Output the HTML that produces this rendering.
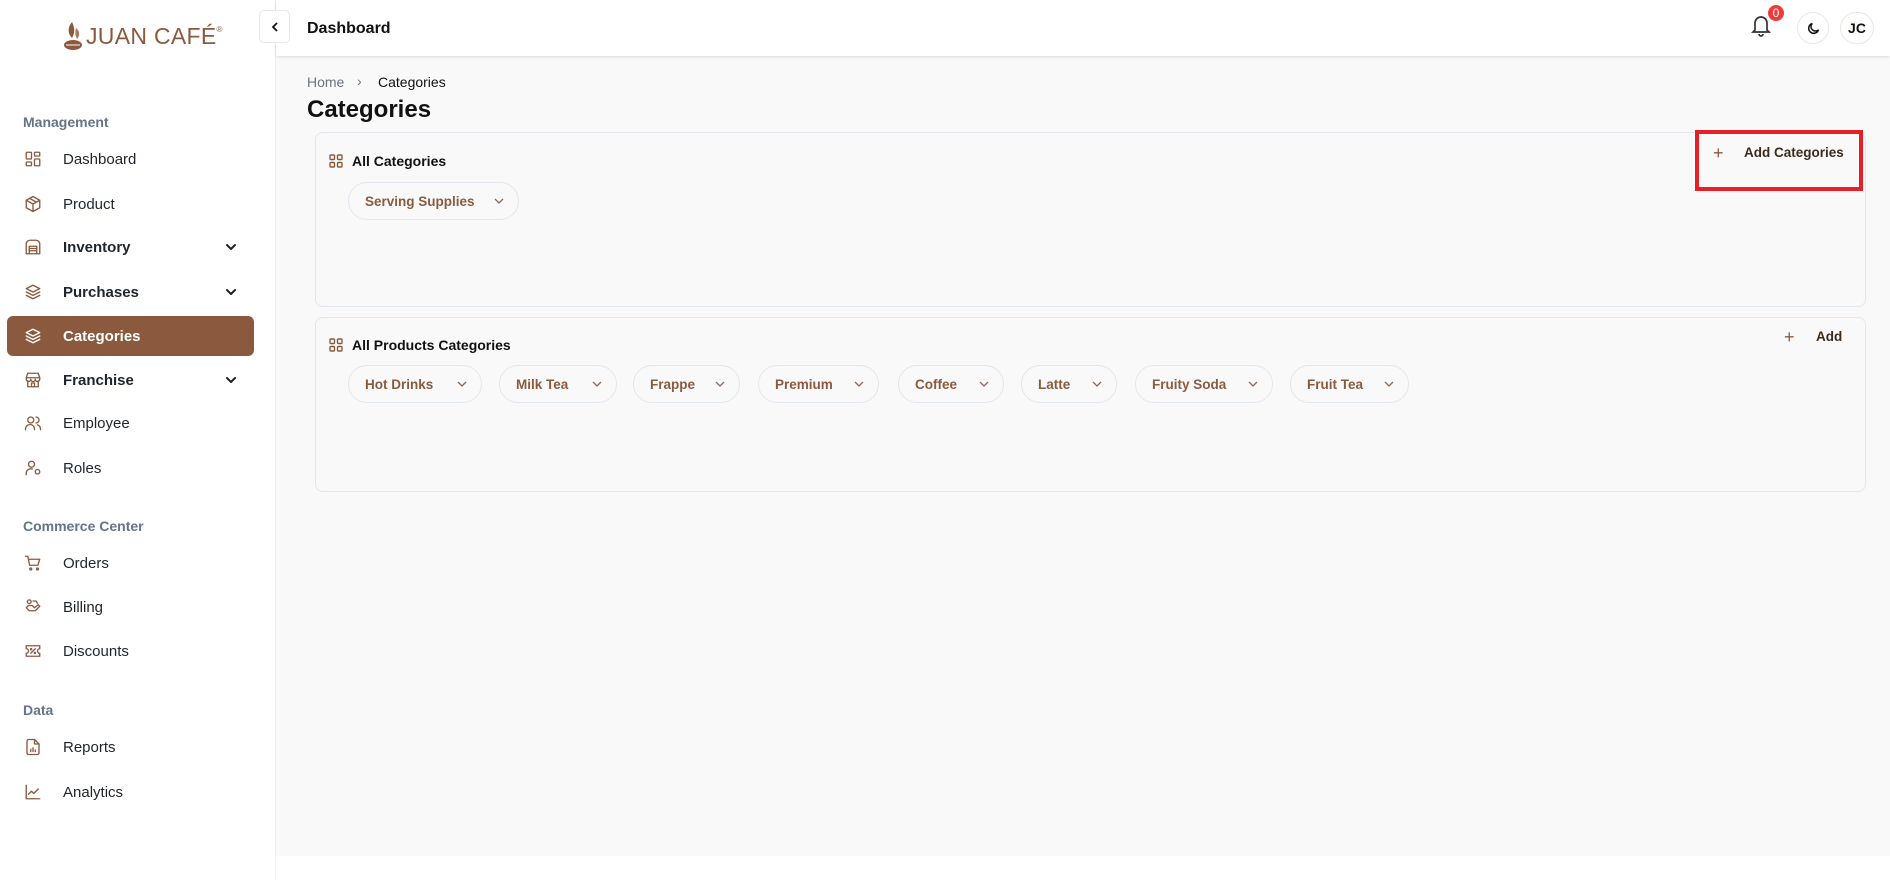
<!DOCTYPE html>
<html><head><meta charset="utf-8"><style>
*{box-sizing:border-box;margin:0;padding:0}
body{width:1890px;height:880px;position:relative;background:#fff;font-family:"Liberation Sans",sans-serif;overflow:hidden;color:#111}
.abs{position:absolute}
#side{left:0;top:0;width:276px;height:880px;background:#fff;border-right:1px solid #eceef1}
.sec{position:absolute;left:23px;font-size:14px;color:#64748b;font-weight:bold}
.it{position:absolute;left:7px;width:247px;height:40px;display:flex;align-items:center;font-size:15px;color:#1f2430}
.it svg{position:absolute;left:17px;width:18px;height:18px;fill:none;stroke:#8b5a3e;stroke-width:1.8;stroke-linecap:round;stroke-linejoin:round}
.it span{position:absolute;left:56px}
.it.b span{font-weight:bold}
.it .ch{position:absolute;left:218px;width:12px;height:12px;stroke:#222;stroke-width:2}
.it.act{background:#8b5a3e;border-radius:6px;color:#fff}
.it.act svg{stroke:#fff}
#main{left:276px;top:56px;width:1614px;height:800px;background:#f9f9fa}
#hdr{left:276px;top:0;width:1614px;height:56px;background:#fff;box-shadow:0 1px 3px rgba(0,0,0,.12)}
.card{position:absolute;left:315px;width:1551px;border:1px solid #e3e7ee;border-radius:8px;background:#f9f9fa}
.ct{position:absolute;left:13px;display:flex;align-items:center;font-size:14px;font-weight:bold;color:#111}
.chip{position:absolute;height:38px;border:1px solid #e3e7ee;border-radius:19px;font-size:13.5px;font-weight:bold;color:#8b5a3e;display:flex;align-items:center;padding-left:16px}
.chip svg{position:absolute;right:14px;top:14px;width:10px;height:8px;fill:none;stroke:#8b6a5a;stroke-width:1.3}
.gi{width:14px;height:14px;margin-right:9px}
</style></head><body>
<div id="side" class="abs">
  <div class="abs" style="left:62px;top:20px;display:flex;align-items:center">
    <svg width="22" height="32" viewBox="0 0 22 32"><path d="M10 2c-5 6-4 12 0 16 3-5 3-10 0-16z" fill="#8b5a3e"/><path d="M14 8c4 3 4 8 1 11-2-4-2-7-1-11z" fill="#a97a5e"/><ellipse cx="11" cy="25" rx="9" ry="5" fill="#8b5a3e"/><path d="M4 25h14" stroke="#fff" stroke-width="1"/></svg>
    <span style="font-size:23px;color:#8b5a3e;letter-spacing:0.3px;margin-left:2px">JUAN CAFÉ</span><sup style="font-size:8px;color:#8b5a3e;margin-top:-14px">®</sup>
  </div>
  <div class="sec" style="top:114px">Management</div>
  <div class="it" style="top:139px"><svg viewBox="0 0 24 24"><rect x="3" y="3" width="7" height="9" rx="1"/><rect x="14" y="3" width="7" height="5" rx="1"/><rect x="14" y="12" width="7" height="9" rx="1"/><rect x="3" y="16" width="7" height="5" rx="1"/></svg><span>Dashboard</span></div>
  <div class="it" style="top:184px"><svg viewBox="0 0 24 24"><path d="M12 2l9 5v10l-9 5-9-5V7z"/><path d="M3 7l9 5 9-5M12 12v10M7.5 4.5l9 5"/></svg><span>Product</span></div>
  <div class="it b" style="top:227px"><svg viewBox="0 0 24 24"><path d="M3 21V8a5 5 0 0 1 5-5h8a5 5 0 0 1 5 5v13z"/><path d="M7 21v-10h10v10M7 14h10M7 17h10"/></svg><span>Inventory</span><svg class="ch" viewBox="0 0 12 12"><path d="M2 4l4 4 4-4"/></svg></div>
  <div class="it b" style="top:272px"><svg viewBox="0 0 24 24"><path d="M12 3l9 4.5-9 4.5-9-4.5z"/><path d="M3 12l9 4.5 9-4.5M3 16.5l9 4.5 9-4.5"/></svg><span>Purchases</span><svg class="ch" viewBox="0 0 12 12"><path d="M2 4l4 4 4-4"/></svg></div>
  <div class="it act b" style="top:316px"><svg viewBox="0 0 24 24"><path d="M12 3l9 4.5-9 4.5-9-4.5z"/><path d="M3 12l9 4.5 9-4.5M3 16.5l9 4.5 9-4.5"/></svg><span>Categories</span></div>
  <div class="it b" style="top:360px"><svg viewBox="0 0 24 24"><path d="M3 9l2-6h14l2 6z"/><path d="M3 9v2a3 3 0 0 0 6 0 3 3 0 0 0 6 0 3 3 0 0 0 6 0V9M5 13v8h14v-8M10 21v-5h4v5"/></svg><span>Franchise</span><svg class="ch" viewBox="0 0 12 12"><path d="M2 4l4 4 4-4"/></svg></div>
  <div class="it" style="top:403px"><svg viewBox="0 0 24 24"><circle cx="9" cy="8" r="4"/><path d="M2 21v-1a6 6 0 0 1 12 0v1M16 4a4 4 0 0 1 0 8M22 21v-1a6 6 0 0 0-4-5.5"/></svg><span>Employee</span></div>
  <div class="it" style="top:448px"><svg viewBox="0 0 24 24"><circle cx="10" cy="7" r="4"/><path d="M3 21v-2a6 6 0 0 1 8-5.6"/><circle cx="18" cy="17" r="3"/></svg><span>Roles</span></div>
  <div class="sec" style="top:518px">Commerce Center</div>
  <div class="it" style="top:543px"><svg viewBox="0 0 24 24"><path d="M2 3h3l2.5 12h11L21 7H6"/><circle cx="9" cy="20" r="1.3"/><circle cx="18" cy="20" r="1.3"/></svg><span>Orders</span></div>
  <div class="it" style="top:587px"><svg viewBox="0 0 24 24"><circle cx="7" cy="5" r="2.5"/><path d="M3 13l4 4h8l6-6-2-2-5 4M3 13l3-3h5l2 2"/><path d="M12 4h4l2 3"/></svg><span>Billing</span></div>
  <div class="it" style="top:631px"><svg viewBox="0 0 24 24"><path d="M3 5h18v4a3 3 0 0 0 0 6v4H3v-4a3 3 0 0 0 0-6z"/><path d="M9 15l6-6"/><circle cx="9.5" cy="9.5" r=".8"/><circle cx="14.5" cy="14.5" r=".8"/></svg><span>Discounts</span></div>
  <div class="sec" style="top:702px">Data</div>
  <div class="it" style="top:727px"><svg viewBox="0 0 24 24"><path d="M14 2H6a2 2 0 0 0-2 2v16a2 2 0 0 0 2 2h12a2 2 0 0 0 2-2V8z"/><path d="M14 2v6h6M9 18v-3M12 18v-5M15 18v-2"/></svg><span>Reports</span></div>
  <div class="it" style="top:772px"><svg viewBox="0 0 24 24"><path d="M3 3v18h18"/><path d="M6 15l4-4 3 3 6-6"/></svg><span>Analytics</span></div>
</div>
<div id="main" class="abs"></div>
<div id="hdr" class="abs">
  <div class="abs" style="left:-17px;top:10px;width:31px;height:33px;border:1px solid #e3e7ee;border-radius:5px;background:#fff"><svg style="position:absolute;left:9px;top:10px" width="12" height="12" viewBox="0 0 12 12"><path d="M8 2L4 6l4 4" fill="none" stroke="#111" stroke-width="1.8"/></svg></div>
  <div class="abs" style="left:31px;top:20px;font-size:16px;font-weight:bold">Dashboard</div>
  <svg class="abs" style="left:1473px;top:13px" width="24" height="24" viewBox="0 0 24 24" fill="none" stroke="#333" stroke-width="1.7"><path d="M6 17V10a6 6 0 0 1 12 0v7l2 2H4z"/><path d="M10 21a2 2 0 0 0 4 0"/></svg>
  <div class="abs" style="left:1492px;top:5px;width:16px;height:16px;border-radius:8px;background:#ef3b3b;color:#fff;font-size:12px;text-align:center;line-height:16px">0</div>
  <div class="abs" style="left:1521px;top:12px;width:32px;height:32px;border:1px solid #e3e7ee;border-radius:16px"><svg style="position:absolute;left:8px;top:8px" width="15" height="15" viewBox="0 0 24 24" fill="none" stroke="#111" stroke-width="2.4"><path d="M20 14A8 8 0 1 1 10 4a6 6 0 0 0 10 10z"/></svg></div>
  <div class="abs" style="left:1564px;top:12px;width:34px;height:32px;border:1px solid #e3e7ee;border-radius:16px;font-size:14px;font-weight:bold;text-align:center;line-height:30px">JC</div>
</div>
<div class="abs" style="left:307px;top:74px;font-size:14px;color:#6b7280">Home</div>
<div class="abs" style="left:357px;top:73px;font-size:14px;color:#6b7280">›</div>
<div class="abs" style="left:378px;top:74px;font-size:14px;color:#111">Categories</div>
<div class="abs" style="left:307px;top:96px;font-size:24px;font-weight:bold">Categories</div>

<div class="card" style="top:132px;height:175px">
  <div class="ct" style="top:20px"><svg class="gi" viewBox="0 0 14 14" fill="none" stroke="#8b5a3e" stroke-width="1.4"><rect x="1" y="1" width="4.5" height="4.5" rx="1"/><rect x="8.5" y="1" width="4.5" height="4.5" rx="1"/><rect x="1" y="8.5" width="4.5" height="4.5" rx="1"/><rect x="8.5" y="8.5" width="4.5" height="4.5" rx="1"/></svg>All Categories</div>
  <div class="chip" style="left:32px;top:49px;width:171px">Serving Supplies<svg viewBox="0 0 10 8"><path d="M1 2l4 4 4-4"/></svg></div>
</div>
<div class="abs" style="left:1713px;top:143px;font-size:18px;color:#8b5a3e">+</div>
<div class="abs" style="left:1744px;top:145px;font-size:13.5px;font-weight:bold;color:#3d2a18">Add Categories</div>
<div class="abs" style="left:1695px;top:130px;width:168px;height:61px;border:4px solid #e52026"></div>

<div class="card" style="top:317px;height:175px">
  <div class="ct" style="top:19px"><svg class="gi" viewBox="0 0 14 14" fill="none" stroke="#8b5a3e" stroke-width="1.4"><rect x="1" y="1" width="4.5" height="4.5" rx="1"/><rect x="8.5" y="1" width="4.5" height="4.5" rx="1"/><rect x="1" y="8.5" width="4.5" height="4.5" rx="1"/><rect x="8.5" y="8.5" width="4.5" height="4.5" rx="1"/></svg>All Products Categories</div>
  <div class="chip" style="left:32px;top:47px;width:134px">Hot Drinks<svg viewBox="0 0 10 8"><path d="M1 2l4 4 4-4"/></svg></div>
  <div class="chip" style="left:183px;top:47px;width:118px">Milk Tea<svg viewBox="0 0 10 8"><path d="M1 2l4 4 4-4"/></svg></div>
  <div class="chip" style="left:317px;top:47px;width:107px">Frappe<svg viewBox="0 0 10 8"><path d="M1 2l4 4 4-4"/></svg></div>
  <div class="chip" style="left:442px;top:47px;width:121px">Premium<svg viewBox="0 0 10 8"><path d="M1 2l4 4 4-4"/></svg></div>
  <div class="chip" style="left:582px;top:47px;width:106px">Coffee<svg viewBox="0 0 10 8"><path d="M1 2l4 4 4-4"/></svg></div>
  <div class="chip" style="left:705px;top:47px;width:96px">Latte<svg viewBox="0 0 10 8"><path d="M1 2l4 4 4-4"/></svg></div>
  <div class="chip" style="left:819px;top:47px;width:138px">Fruity Soda<svg viewBox="0 0 10 8"><path d="M1 2l4 4 4-4"/></svg></div>
  <div class="chip" style="left:974px;top:47px;width:119px">Fruit Tea<svg viewBox="0 0 10 8"><path d="M1 2l4 4 4-4"/></svg></div>
</div>
<div class="abs" style="left:1784px;top:327px;font-size:18px;color:#8b5a3e">+</div>
<div class="abs" style="left:1816px;top:329px;font-size:13.5px;font-weight:bold;color:#3d2a18">Add</div>
</body></html>
